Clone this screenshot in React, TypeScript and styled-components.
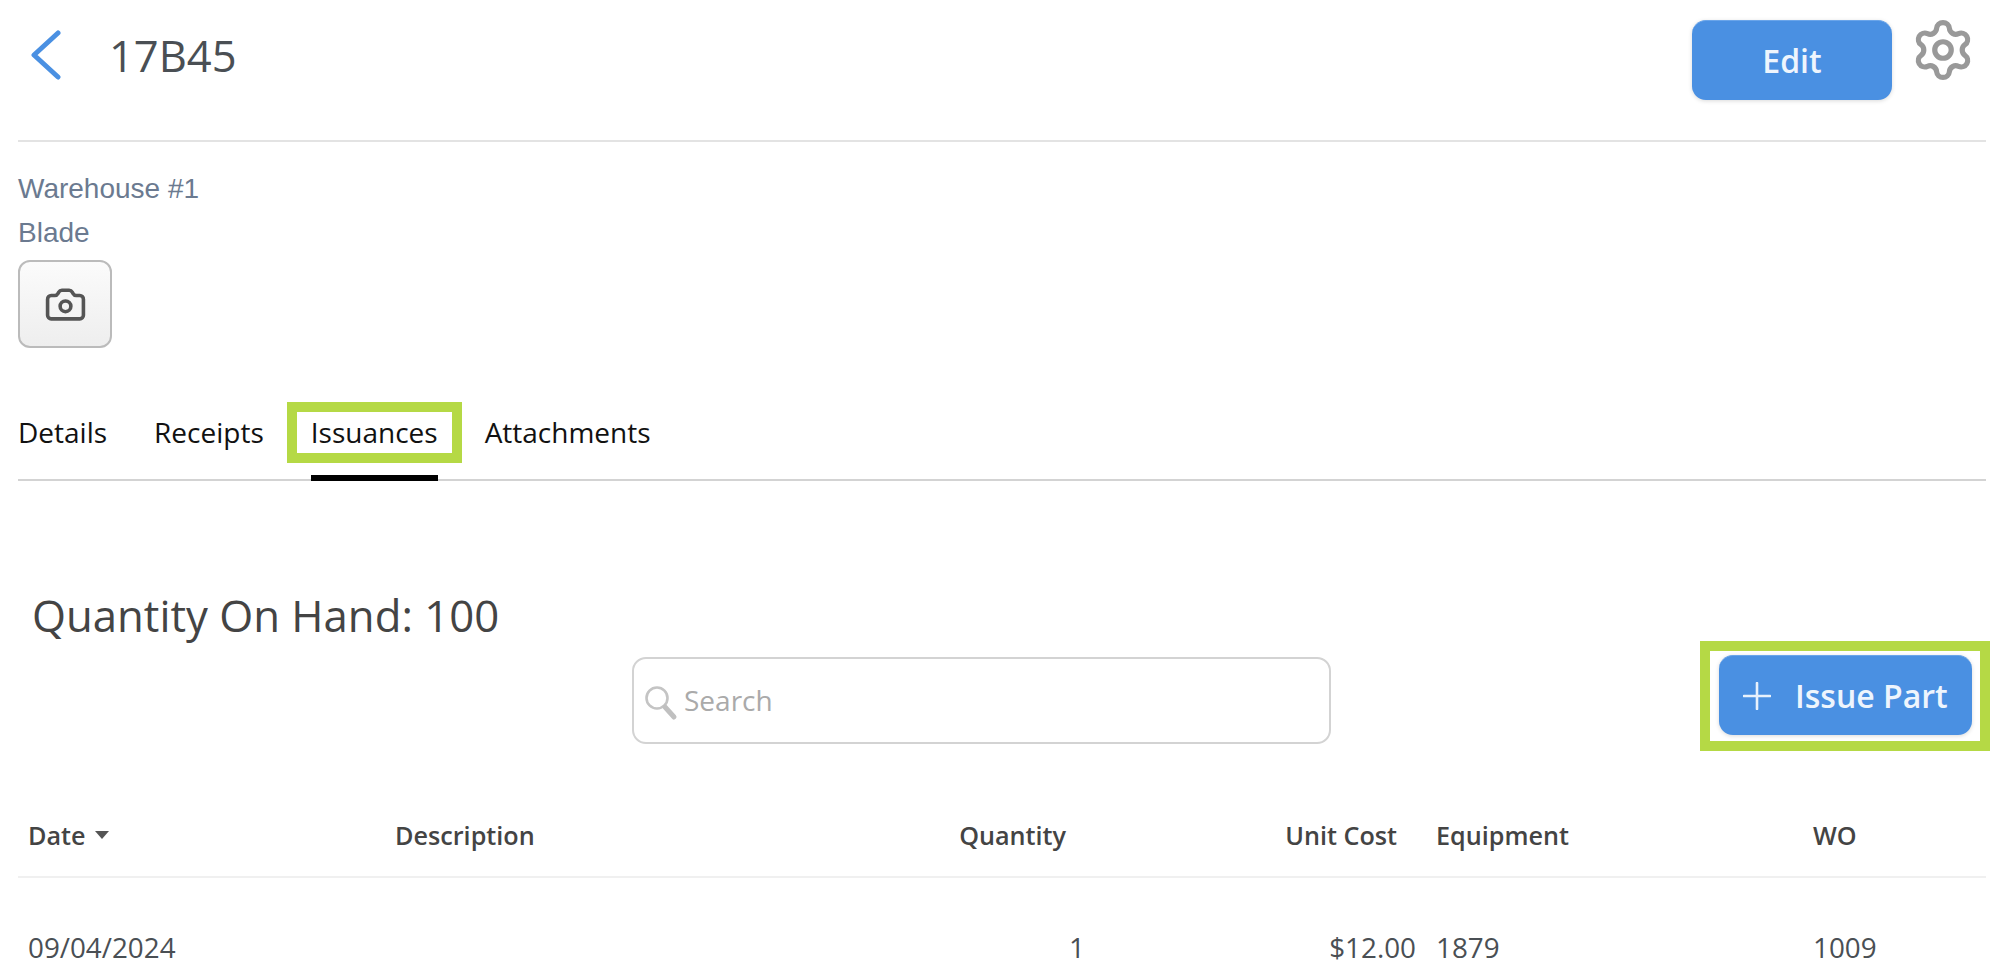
import React from 'react';
import styled, { createGlobalStyle } from 'styled-components';
import { Camera, Settings } from 'lucide-react';

const TABS = ['Details', 'Receipts', 'Issuances', 'Attachments'];

const ROWS = [{ date: '09/04/2024', description: '', quantity: '1', unitCost: '$12.00', equipment: '1879', wo: '1009' }];

export default function App() {
  return (
    <Page>
      <GlobalStyle />
      <Header>
        <TitleGroup>
          <BackLink aria-label="Back">
            <svg width="30" height="50" viewBox="0 0 30 50" fill="none">
              <polyline points="27,3 3,25 27,47" stroke="#4a90e2" strokeWidth="5" strokeLinecap="round" strokeLinejoin="round" />
            </svg>
          </BackLink>
          <Title>17B45</Title>
        </TitleGroup>
        <HeaderActions>
          <EditButton>Edit</EditButton>
          <GearButton aria-label="Settings">
            <Settings size={66} strokeWidth={1.9} color="#999999" />
          </GearButton>
        </HeaderActions>
      </Header>

      <Info>
        <InfoLine>Warehouse #1</InfoLine>
        <InfoLine>Blade</InfoLine>
        <PhotoButton aria-label="Add photo">
          <Camera size={43} strokeWidth={2} color="#555555" />
        </PhotoButton>
      </Info>

      <Tabs>
        {TABS.map((tab) => (
          <Tab key={tab} $active={tab === 'Issuances'}>
            {tab}
          </Tab>
        ))}
      </Tabs>

      <Quantity>Quantity On Hand: 100</Quantity>

      <Toolbar>
        <SearchBox>
          <svg width="34" height="36" viewBox="0 0 34 36" fill="none">
            <circle cx="13" cy="13" r="10.5" stroke="#c4c4c4" strokeWidth="2.6" />
            <line x1="21" y1="22" x2="30" y2="32" stroke="#c0c0c0" strokeWidth="5" strokeLinecap="round" />
          </svg>
          <SearchInput placeholder="Search" />
        </SearchBox>
        <IssueButton>
          <svg width="28" height="28" viewBox="0 0 28 28" fill="none">
            <path d="M14 1v26M1 14h26" stroke="#e8f1fc" strokeWidth="2.6" strokeLinecap="round" />
          </svg>
          Issue Part
        </IssueButton>
      </Toolbar>

      <Table>
        <HeadRow>
          <HeadCell>
            Date
            <SortCaret />
          </HeadCell>
          <HeadCell>Description</HeadCell>
          <HeadCell $inset={29}>Quantity</HeadCell>
          <HeadCell $inset={29}>Unit Cost</HeadCell>
          <HeadCell>Equipment</HeadCell>
          <HeadCell>WO</HeadCell>
        </HeadRow>
        {ROWS.map((row) => (
          <BodyRow key={row.wo}>
            <BodyCell>{row.date}</BodyCell>
            <BodyCell>{row.description}</BodyCell>
            <BodyCell $right>{row.quantity}</BodyCell>
            <BodyCell $right>{row.unitCost}</BodyCell>
            <BodyCell>{row.equipment}</BodyCell>
            <BodyCell>{row.wo}</BodyCell>
          </BodyRow>
        ))}
      </Table>
    </Page>
  );
}

const GlobalStyle = createGlobalStyle`
  html, body {
    margin: 0;
    height: 100%;
    overflow: hidden;
    background: #ffffff;
  }
  * {
    box-sizing: border-box;
  }
`;

const Page = styled.div`
  width: 1996px;
  height: 968px;
  overflow: hidden;
  padding: 0 10px 0 18px;
  font-family: 'Open Sans', sans-serif;
  color: #4a4a4a;
`;

const Header = styled.header`
  display: flex;
  justify-content: space-between;
  height: 142px;
  border-bottom: 2px solid #e3e3e3;
`;

const TitleGroup = styled.div`
  display: flex;
  align-items: flex-start;
  padding: 30px 0 0 13px;
`;

const BackLink = styled.a`
  display: block;
  width: 30px;
  height: 50px;
`;

const Title = styled.h1`
  margin: -4px 0 0 48px;
  font-size: 43.5px;
  line-height: 60px;
  font-weight: 400;
  color: #4a4f54;
`;

const HeaderActions = styled.div`
  display: flex;
  align-items: flex-start;
  padding: 20px 10px 0 0;
`;

const EditButton = styled.button`
  width: 200px;
  height: 80px;
  border: 0;
  border-top: 1px solid #6aa5ea;
  border-radius: 14px;
  background: #4a90e2;
  box-shadow: 0 1px 4px rgba(0, 0, 0, 0.15);
  color: #eef5fd;
  font-family: inherit;
  font-size: 32px;
  font-weight: 600;
`;

const GearButton = styled.div`
  margin: -3px 0 0 18px;
  width: 66px;
  height: 66px;
`;

const Info = styled.section`
  padding-top: 25px;
`;

const InfoLine = styled.div`
  font-family: 'Liberation Sans', Arial, sans-serif;
  font-size: 28px;
  line-height: 44px;
  color: #6b7a90;
`;

const PhotoButton = styled.button`
  display: flex;
  align-items: center;
  justify-content: center;
  margin-top: 5px;
  padding: 0;
  width: 94px;
  height: 88px;
  border: 2px solid #bbbbbb;
  border-radius: 12px;
  background: linear-gradient(#fbfbfb, #eeeeee);
`;

const Tabs = styled.nav`
  display: flex;
  gap: 47px;
  margin-top: 54px;
  height: 79px;
  border-bottom: 2px solid #d3d3d3;
`;

const Tab = styled.div<{ $active?: boolean }>`
  position: relative;
  height: 79px;
  padding-top: 10px;
  font-size: 28px;
  line-height: 41px;
  color: #111111;
  border-bottom: ${(p) => (p.$active ? '6px solid #000000' : '0')};

  ${(p) =>
    p.$active &&
    `
    &::after {
      content: '';
      position: absolute;
      top: 0;
      bottom: 12px;
      left: -24px;
      right: -24px;
      border: 10px solid #b5d945;
    }
  `}
`;

const Quantity = styled.h2`
  margin: 104px 0 0 14px;
  font-size: 43.7px;
  line-height: 60px;
  font-weight: 400;
  color: #444444;
`;

const Toolbar = styled.div`
  position: relative;
  display: flex;
  align-items: flex-start;
  justify-content: space-between;
  margin-top: 10px;
  padding-left: 614px;
`;

const SearchBox = styled.label`
  display: flex;
  align-items: center;
  gap: 4px;
  margin-top: 2px;
  width: 699px;
  height: 87px;
  padding: 4px 0 0 10px;
  border: 2px solid #d3d3d3;
  border-radius: 14px;
`;

const SearchInput = styled.input`
  flex: 1;
  min-width: 0;
  margin-top: -5px;
  border: 0;
  outline: 0;
  background: transparent;
  font-family: inherit;
  font-size: 28px;
  color: #444444;

  &::placeholder {
    color: #aaaaaa;
    opacity: 1;
  }
`;

const IssueButton = styled.button`
  position: relative;
  display: flex;
  align-items: center;
  gap: 24px;
  margin-right: 14px;
  padding: 0 0 0 24px;
  width: 253px;
  height: 80px;
  border: 0;
  border-top: 1px solid #6aa5ea;
  border-radius: 14px;
  background: #4a90e2;
  box-shadow: 0 1px 4px rgba(0, 0, 0, 0.15);
  color: #eef5fd;
  font-family: inherit;
  font-size: 32px;
  font-weight: 600;
  white-space: nowrap;

  &::after {
    content: '';
    position: absolute;
    top: -15px;
    bottom: -16px;
    left: -19px;
    right: -18px;
    border: 10px solid #b5d945;
  }
`;

const COLUMNS = '367px 420px 290px 331px 377px 1fr';

const Table = styled.div`
  margin-top: 46px;
`;

const HeadRow = styled.div`
  display: grid;
  grid-template-columns: ${COLUMNS};
  height: 88px;
  padding-top: 3px;
  align-items: center;
  border-bottom: 2px solid #f0f0f0;
`;

const BodyRow = styled.div`
  display: grid;
  grid-template-columns: ${COLUMNS};
  height: 138px;
  align-items: center;
`;

const HeadCell = styled.div<{ $inset?: number }>`
  display: flex;
  align-items: center;
  justify-content: ${(p) => (p.$inset ? 'flex-end' : 'flex-start')};
  padding: 0 ${(p) => p.$inset ?? 10}px 0 10px;
  font-size: 25.2px;
  font-weight: 600;
  color: #444444;
`;

const BodyCell = styled.div<{ $right?: boolean }>`
  padding: 0 10px;
  min-height: 38px;
  text-align: ${(p) => (p.$right ? 'right' : 'left')};
  font-size: 27.8px;
  color: #4a4f54;
`;

const SortCaret = styled.span`
  margin: 0 0 0 9px;
  border-left: 7px solid transparent;
  border-right: 7px solid transparent;
  border-top: 8px solid #555555;
`;
